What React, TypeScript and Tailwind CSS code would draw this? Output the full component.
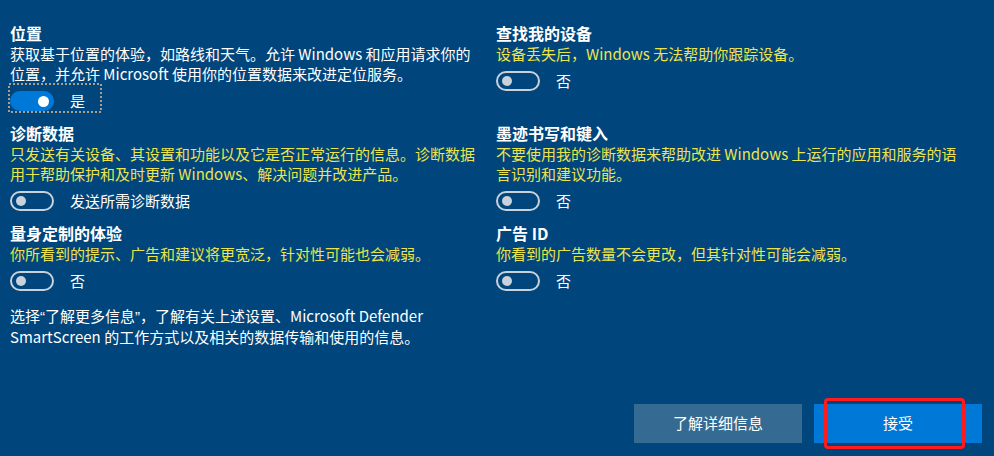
import React from "react";

const Toggle = ({ on }: { on?: boolean }) =>
  on ? (
    <div className="w-[44px] h-[20px] rounded-full bg-[#0078d7] flex items-center justify-end pr-[5px] shrink-0">
      <div className="w-[11px] h-[11px] rounded-full bg-white" />
    </div>
  ) : (
    <div className="w-[44px] h-[20px] rounded-full border-2 border-[#c9d1db] flex items-center pl-[4px] shrink-0">
      <div className="w-[10px] h-[10px] rounded-full bg-[#c9d1db]" />
    </div>
  );

const Section = ({
  title,
  lines,
  label,
  on,
  white,
  focus,
}: {
  title: string;
  lines: string[];
  label: string;
  on?: boolean;
  white?: boolean;
  focus?: boolean;
}) => (
  <div className="flex flex-col">
    <div className="text-[16px] font-bold leading-[21px] whitespace-nowrap">{title}</div>
    <div className={`text-[15px] leading-[20px] ${white ? "text-white" : "text-[#ece44c]"}`}>
      {lines.map((l, i) => (
        <div key={i} className="whitespace-nowrap">
          {l}
        </div>
      ))}
    </div>
    <div className="mt-[7px] h-[20px] flex items-center relative">
      <Toggle on={on} />
      <span className="ml-[16px] text-[15px] leading-[20px] whitespace-nowrap">{label}</span>
      {focus && (
        <svg className="absolute left-[-2px] top-[-8px]" width="94" height="30" viewBox="0 0 94 30">
          <rect x="1" y="1" width="92" height="28" fill="none" stroke="#aaa08f" strokeWidth="2" strokeDasharray="2 2" />
        </svg>
      )}
    </div>
  </div>
);

export default function App() {
  return (
    <div className="w-[994px] h-[456px] bg-[#00457b] text-white flex flex-col overflow-hidden font-['Noto_Sans_CJK_SC',sans-serif]">
      <div className="grid grid-cols-[470px_470px] gap-x-[16px] gap-y-[12px] pl-[10px] pt-[23px]">
        <Section
          title="位置"
          white
          focus
          on
          lines={[
            "获取基于位置的体验，如路线和天气。允许 Windows 和应用请求你的",
            "位置，并允许 Microsoft 使用你的位置数据来改进定位服务。",
          ]}
          label="是"
        />
        <Section title="查找我的设备" lines={["设备丢失后，Windows 无法帮助你跟踪设备。"]} label="否" />
        <Section
          title="诊断数据"
          lines={[
            "只发送有关设备、其设置和功能以及它是否正常运行的信息。诊断数据",
            "用于帮助保护和及时更新 Windows、解决问题并改进产品。",
          ]}
          label="发送所需诊断数据"
        />
        <Section
          title="墨迹书写和键入"
          lines={["不要使用我的诊断数据来帮助改进 Windows 上运行的应用和服务的语", "言识别和建议功能。"]}
          label="否"
        />
        <Section
          title="量身定制的体验"
          lines={["你所看到的提示、广告和建议将更宽泛，针对性可能也会减弱。"]}
          label="否"
        />
        <Section title="广告 ID" lines={["你看到的广告数量不会更改，但其针对性可能会减弱。"]} label="否" />
      </div>
      <div className="mt-[15px] pl-[10px] text-[15px] leading-[20px]">
        <div className="whitespace-nowrap">
          选择<span className="font-['Liberation_Sans',sans-serif]">“</span>了解更多信息
          <span className="font-['Liberation_Sans',sans-serif]">”</span>，了解有关上述设置、Microsoft Defender
        </div>
        <div className="whitespace-nowrap">SmartScreen 的工作方式以及相关的数据传输和使用的信息。</div>
      </div>
      <div className="mt-auto flex justify-end gap-[12px] pr-[12px] pb-[13px]">
        <button className="w-[168px] h-[39px] bg-[#356a92] text-white text-[15px] flex items-center justify-center">
          了解详细信息
        </button>
        <div className="relative">
          <button className="w-[168px] h-[39px] bg-[#0078d7] text-white text-[15px] flex items-center justify-center">
            接受
          </button>
          <div className="absolute left-[10px] right-[17px] top-[-6px] bottom-[-6px] border-[3px] border-[#ff1c1c] rounded-[4px]" />
        </div>
      </div>
    </div>
  );
}
